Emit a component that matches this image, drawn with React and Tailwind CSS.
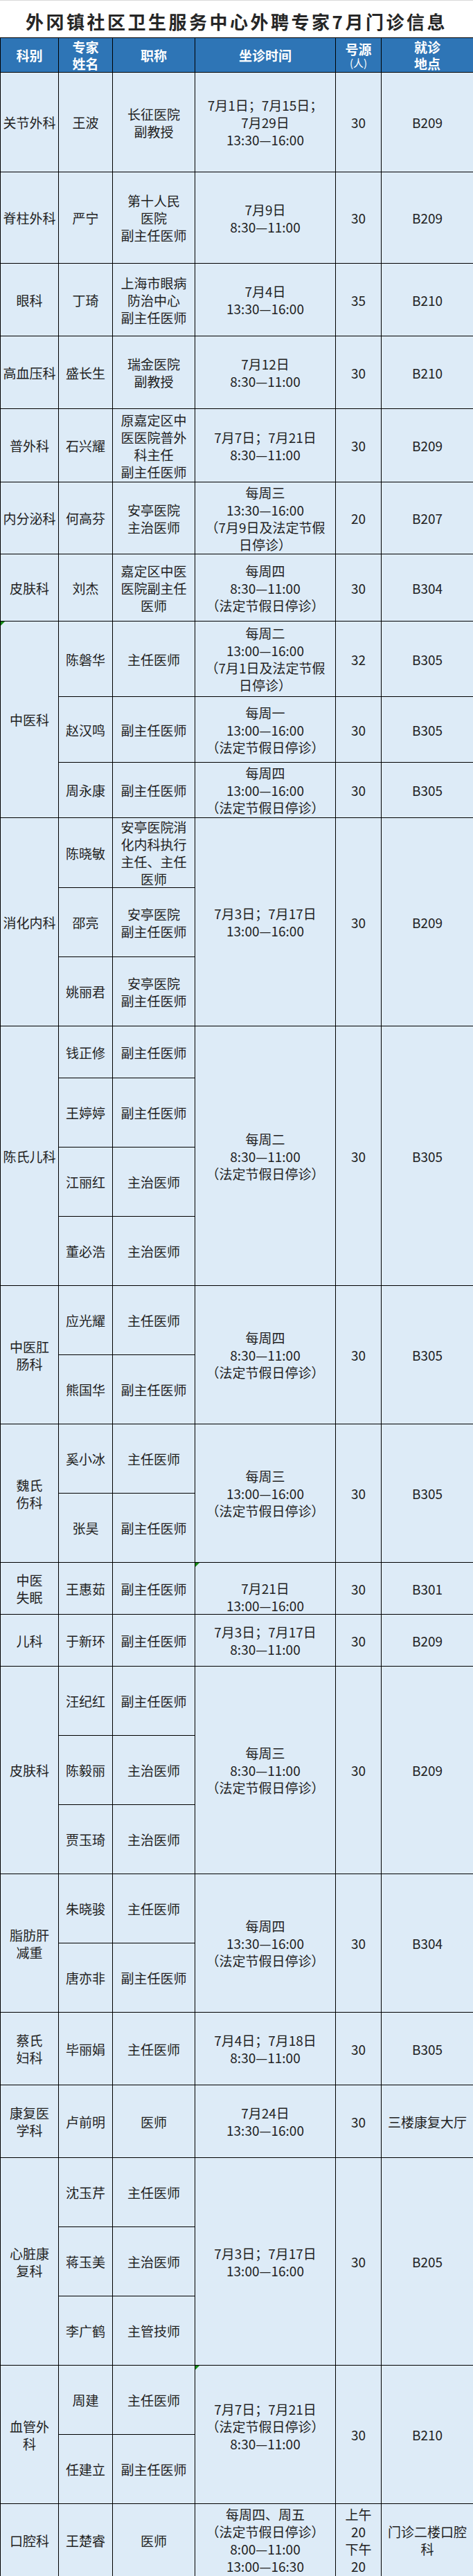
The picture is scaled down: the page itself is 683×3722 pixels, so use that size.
import React from "react";

const groups = [
  { dept: ["关节外科"], docs: [{ n: "王波", t: ["长征医院", "副教授"], h: "h-[144px]" }], time: ["7月1日；7月15日；", "7月29日", "13:30—16:00"], num: ["30"], loc: ["B209"] },
  { dept: ["脊柱外科"], docs: [{ n: "严宁", t: ["第十人民", "医院", "副主任医师"], h: "h-[132px]" }], time: ["7月9日", "8:30—11:00"], num: ["30"], loc: ["B209"] },
  { dept: ["眼科"], docs: [{ n: "丁琦", t: ["上海市眼病", "防治中心", "副主任医师"], h: "h-[105px]" }], time: ["7月4日", "13:30—16:00"], num: ["35"], loc: ["B210"] },
  { dept: ["高血压科"], docs: [{ n: "盛长生", t: ["瑞金医院", "副教授"], h: "h-[105px]" }], time: ["7月12日", "8:30—11:00"], num: ["30"], loc: ["B210"] },
  { dept: ["普外科"], docs: [{ n: "石兴耀", t: ["原嘉定区中", "医医院普外", "科主任", "副主任医师"], h: "h-[106px]" }], time: ["7月7日；7月21日", "8:30—11:00"], num: ["30"], loc: ["B209"] },
  { dept: ["内分泌科"], docs: [{ n: "何高芬", t: ["安亭医院", "主治医师"], h: "h-[104px]" }], time: ["每周三", "13:30—16:00", "（7月9日及法定节假", "日停诊）"], num: ["20"], loc: ["B207"] },
  { dept: ["皮肤科"], docs: [{ n: "刘杰", t: ["嘉定区中医", "医院副主任", "医师"], h: "h-[97px]" }], time: ["每周四", "8:30—11:00", "（法定节假日停诊）"], num: ["30"], loc: ["B304"] },
  {
    dept: ["中医科"], deptMark: true, perDoc: true,
    docs: [
      { n: "陈磐华", t: ["主任医师"], h: "h-[109px]", time: ["每周二", "13:00—16:00", "（7月1日及法定节假", "日停诊）"], num: ["32"], loc: ["B305"] },
      { n: "赵汉鸣", t: ["副主任医师"], h: "h-[95px]", time: ["每周一", "13:00—16:00", "（法定节假日停诊）"], num: ["30"], loc: ["B305"] },
      { n: "周永康", t: ["副主任医师"], h: "h-[80px]", time: ["每周四", "13:00—16:00", "（法定节假日停诊）"], num: ["30"], loc: ["B305"] },
    ],
  },
  {
    dept: ["消化内科"],
    docs: [
      { n: "陈晓敏", t: ["安亭医院消", "化内科执行", "主任、主任", "医师"], h: "h-[100px]" },
      { n: "邵亮", t: ["安亭医院", "副主任医师"], h: "h-[100px]" },
      { n: "姚丽君", t: ["安亭医院", "副主任医师"], h: "h-[100px]" },
    ],
    time: ["7月3日；7月17日", "13:00—16:00"], num: ["30"], loc: ["B209"],
  },
  {
    dept: ["陈氏儿科"],
    docs: [
      { n: "钱正修", t: ["副主任医师"], h: "h-[75px]" },
      { n: "王婷婷", t: ["副主任医师"], h: "h-[100px]" },
      { n: "江丽红", t: ["主治医师"], h: "h-[100px]" },
      { n: "董必浩", t: ["主治医师"], h: "h-[100px]" },
    ],
    time: ["每周二", "8:30—11:00", "（法定节假日停诊）"], num: ["30"], loc: ["B305"],
  },
  {
    dept: ["中医肛", "肠科"],
    docs: [
      { n: "应光耀", t: ["主任医师"], h: "h-[100px]" },
      { n: "熊国华", t: ["副主任医师"], h: "h-[100px]" },
    ],
    time: ["每周四", "8:30—11:00", "（法定节假日停诊）"], num: ["30"], loc: ["B305"],
  },
  {
    dept: ["魏氏", "伤科"],
    docs: [
      { n: "奚小冰", t: ["主任医师"], h: "h-[100px]" },
      { n: "张昊", t: ["副主任医师"], h: "h-[100px]" },
    ],
    time: ["每周三", "13:00—16:00", "（法定节假日停诊）"], num: ["30"], loc: ["B305"],
  },
  { dept: ["中医", "失眠"], docs: [{ n: "王惠茹", t: ["副主任医师"], h: "h-[75px]" }], time: ["7月21日", "13:00—16:00"], timeClass: "pt-6", timeMark: true, num: ["30"], loc: ["B301"] },
  { dept: ["儿科"], docs: [{ n: "于新环", t: ["副主任医师"], h: "h-[75px]" }], time: ["7月3日；7月17日", "8:30—11:00"], num: ["30"], loc: ["B209"] },
  {
    dept: ["皮肤科"],
    docs: [
      { n: "汪纪红", t: ["副主任医师"], h: "h-[100px]" },
      { n: "陈毅丽", t: ["主治医师"], h: "h-[100px]" },
      { n: "贾玉琦", t: ["主治医师"], h: "h-[100px]" },
    ],
    time: ["每周三", "8:30—11:00", "（法定节假日停诊）"], num: ["30"], loc: ["B209"],
  },
  {
    dept: ["脂肪肝", "减重"],
    docs: [
      { n: "朱晓骏", t: ["主任医师"], h: "h-[100px]" },
      { n: "唐亦非", t: ["副主任医师"], h: "h-[100px]" },
    ],
    time: ["每周四", "13:30—16:00", "（法定节假日停诊）"], num: ["30"], loc: ["B304"],
  },
  { dept: ["蔡氏", "妇科"], docs: [{ n: "毕丽娟", t: ["主任医师"], h: "h-[105px]" }], time: ["7月4日；7月18日", "8:30—11:00"], num: ["30"], loc: ["B305"] },
  { dept: ["康复医", "学科"], docs: [{ n: "卢前明", t: ["医师"], h: "h-[105px]" }], time: ["7月24日", "13:30—16:00"], num: ["30"], loc: ["三楼康复大厅"] },
  {
    dept: ["心脏康", "复科"],
    docs: [
      { n: "沈玉芹", t: ["主任医师"], h: "h-[100px]" },
      { n: "蒋玉美", t: ["主治医师"], h: "h-[100px]" },
      { n: "李广鹤", t: ["主管技师"], h: "h-[100px]" },
    ],
    time: ["7月3日；7月17日", "13:00—16:00"], num: ["30"], loc: ["B205"],
  },
  {
    dept: ["血管外", "科"],
    docs: [
      { n: "周建", t: ["主任医师"], h: "h-[100px]" },
      { n: "任建立", t: ["副主任医师"], h: "h-[100px]" },
    ],
    time: ["7月7日；7月21日", "（法定节假日停诊）", "8:30—11:00", ""], timeMark: true, num: ["30"], loc: ["B210"],
  },
  { dept: ["口腔科"], docs: [{ n: "王楚睿", t: ["医师"], h: "h-[105px]" }], time: ["每周四、周五", "（法定节假日停诊）", "8:00—11:00", "13:00—16:30"], num: ["上午", "20", "下午", "20"], loc: ["门诊二楼口腔", "科"] },
];

const cell = "relative border border-black bg-[#ddebf7] p-0 text-center align-middle";

function Lines({ lines }) {
  return lines.map((l, i) => (
    <div key={i} className="whitespace-nowrap">
      {l || "\u00a0"}
    </div>
  ));
}

function Mark() {
  return <span className="absolute left-0 top-0 h-0 w-0 border-t-[6px] border-r-[6px] border-t-[#138a13] border-r-transparent" />;
}

export default function App() {
  const body = [];
  groups.forEach((g, gi) => {
    g.docs.forEach((d, di) => {
      const span = g.docs.length;
      body.push(
        <tr key={`${gi}-${di}`} className={d.h}>
          {di === 0 && (
            <td rowSpan={span} className={cell}>
              {g.deptMark && <Mark />}
              <Lines lines={g.dept} />
            </td>
          )}
          <td className={cell}>
            <Lines lines={[d.n]} />
          </td>
          <td className={cell}>
            <Lines lines={d.t} />
          </td>
          {g.perDoc ? (
            <>
              <td className={cell}>
                <Lines lines={d.time} />
              </td>
              <td className={cell}>
                <Lines lines={d.num} />
              </td>
              <td className={cell}>
                <Lines lines={d.loc} />
              </td>
            </>
          ) : (
            di === 0 && (
              <>
                <td rowSpan={span} className={cell}>
                  {g.timeMark && <Mark />}
                  <div className={g.timeClass || ""}>
                    <Lines lines={g.time} />
                  </div>
                </td>
                <td rowSpan={span} className={cell}>
                  <Lines lines={g.num} />
                </td>
                <td rowSpan={span} className={cell}>
                  <Lines lines={g.loc} />
                </td>
              </>
            )
          )}
        </tr>
      );
    });
  });

  const th = "border border-black bg-[#2e75b6] p-0 text-center align-middle font-bold text-white";

  return (
    <div className="w-[683px] bg-white font-['Noto_Sans_CJK_SC','Noto_Sans',sans-serif]">
      <div className="flex h-[54px] items-center justify-center border-t border-[#d9d9d9] pt-[5px] text-[26px] font-bold tracking-[3.5px] text-[#262626]">
        外冈镇社区卫生服务中心外聘专家7月门诊信息
      </div>
      <table className="w-[683px] table-fixed border-collapse text-[19px] leading-[25px] text-[#222]">
        <colgroup>
          <col className="w-[84px]" />
          <col className="w-[78px]" />
          <col className="w-[119px]" />
          <col className="w-[203px]" />
          <col className="w-[66px]" />
          <col className="w-[133px]" />
        </colgroup>
        <thead>
          <tr className="h-[50px] leading-[24px]">
            <th className={th}>科别</th>
            <th className={th}>
              <div>专家</div>
              <div>姓名</div>
            </th>
            <th className={th}>职称</th>
            <th className={th}>坐诊时间</th>
            <th className={th}>
              <div className="leading-[22px]">号源</div>
              <div className="text-[15px] font-normal leading-[18px]">(人)</div>
            </th>
            <th className={th}>
              <div>就诊</div>
              <div>地点</div>
            </th>
          </tr>
        </thead>
        <tbody>{body}</tbody>
      </table>
    </div>
  );
}
